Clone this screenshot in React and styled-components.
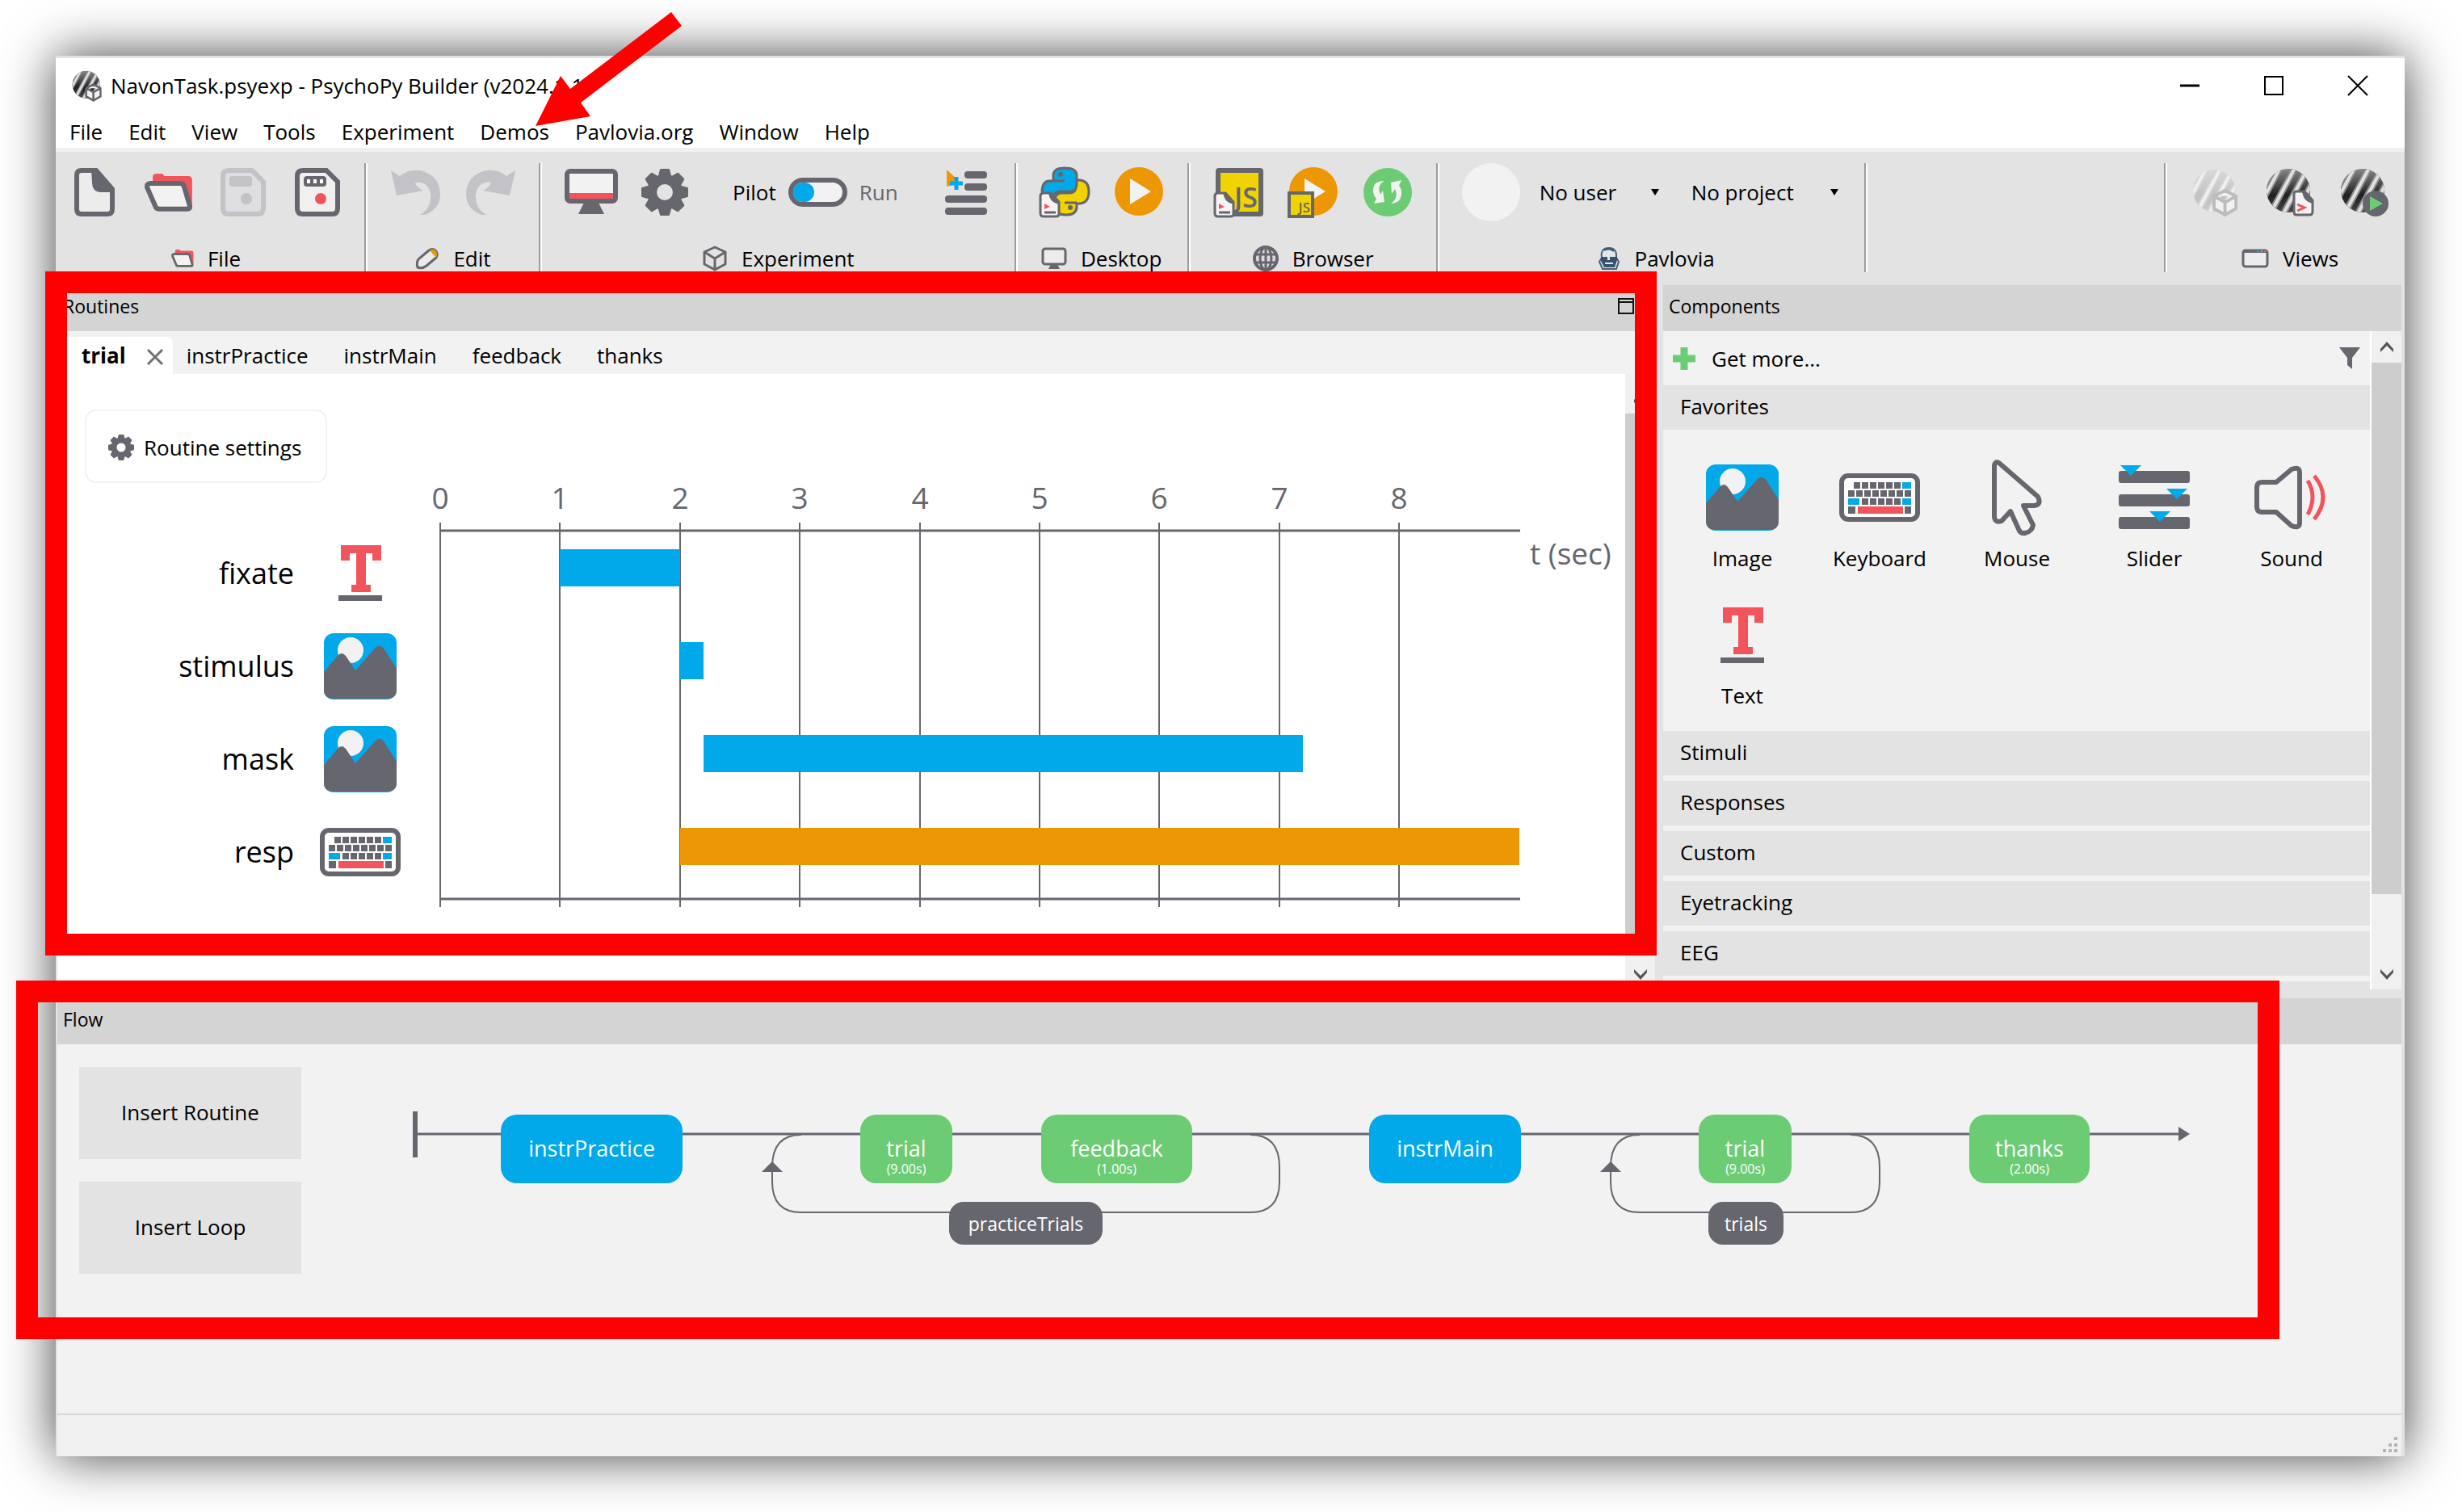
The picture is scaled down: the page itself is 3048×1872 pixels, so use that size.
import React from "react";
import styled, { createGlobalStyle } from "styled-components";

const C = {
  ink: "#66666e",
  blue: "#02a9ea",
  red: "#f2545b",
  orange: "#ec9703",
  green: "#6ccc74",
  yellow: "#f1d302",
  faded: "#c3c3c7",
  bar: "#e3e3e3",
  head: "#d4d4d4",
  panel: "#f2f2f2",
  thumb: "#cdcdcd",
  mark: "#ff0000",
};

const Global = createGlobalStyle`
  *, *::before, *::after { box-sizing: border-box; }
  body { margin: 0; background: #fff; }
  body, button, input, select { font-family: "Open Sans", "Noto Sans", sans-serif; font-size: 26px; line-height: 34px; color: #000; }
  button { border: 0; padding: 0; margin: 0; background: none; cursor: pointer; }
  svg { display: block; flex: none; overflow: visible; }
`;

const Page = styled.div`
  position: relative;
  display: flex;
  height: 100vh;
  padding: 69px 71px 69px 69px;
  overflow: hidden;
`;
const AppWindow = styled.div`
  flex: 1;
  min-width: 0;
  display: flex;
  flex-direction: column;
  background: #fff;
  box-shadow: 0 0 60px rgba(0, 0, 0, 0.75);
`;
const TitleBar = styled.header`
  display: flex;
  align-items: center;
  height: 74px;
  padding: 0 6px 4px 20px;
  border-top: 3px solid #e2e2e2;
`;
const Title = styled.h1`
  flex: 1;
  margin: 0 0 0 10px;
  font-size: 26px;
  font-weight: 400;
`;
const WindowButton = styled.button`
  display: grid;
  place-items: center;
  width: 104px;
  height: 66px;
`;
const MenuBar = styled.nav`
  display: flex;
  align-items: center;
  gap: 32px;
  height: 40px;
  padding-left: 17px;
`;
const Body = styled.div`
  flex: 1;
  min-height: 0;
  display: flex;
  flex-direction: column;
  padding: 0 4px 0 2px;
  border-top: 5px solid #f0f0f0;
  background: ${C.bar};
`;

const Toolbar = styled.div`
  display: flex;
  height: 165px;
  padding: 14px 0 16px;
`;
const Group = styled.section`
  display: flex;
  flex-direction: column;
  justify-content: space-between;
  align-items: center;
  padding: 0 ${(p) => p.$end ?? 28}px 0 ${(p) => p.$start ?? 28}px;
  ${(p) => !p.$last && "border-right: 2px solid #9c9c9c; box-shadow: 2px 0 0 #fff;"}
`;
const Spacer = styled.div`
  flex: 1;
  border-right: 2px solid #9c9c9c;
  box-shadow: 2px 0 0 #fff;
`;
const Tools = styled.div`
  display: flex;
  align-items: center;
  gap: ${(p) => p.$gap || 28}px;
  height: 72px;
`;
const Tool = styled.button`
  display: grid;
  place-items: center;
  width: 64px;
  height: 64px;
`;
const GroupLabel = styled.div`
  display: flex;
  align-items: center;
  gap: 17px;
  height: 34px;
`;
const PilotSwitch = styled.label`
  display: flex;
  align-items: center;
  gap: 15px;
  margin: 0 24px;
`;
const RunText = styled.span`
  color: ${C.ink};
`;
const Toggle = styled.input`
  appearance: none;
  width: 73px;
  height: 36px;
  margin: 0;
  border: 6px solid ${C.ink};
  border-radius: 18px;
  background: ${C.panel};
  &::before {
    content: "";
    display: block;
    width: 26px;
    height: 24px;
    border-radius: 13px;
    background: ${C.blue};
  }
`;
const Avatar = styled.div`
  width: 72px;
  height: 72px;
  border-radius: 50%;
  background: ${C.panel};
`;
const Picker = styled.label`
  display: flex;
  align-items: center;
  width: ${(p) => p.$width}px;
  margin-right: 16px;
`;
const Select = styled.select`
  flex: 1;
  min-width: 0;
  appearance: none;
  border: 0;
  padding: 0;
  background: transparent;
`;

const Workspace = styled.main`
  flex: 1;
  min-height: 0;
  display: flex;
  gap: 10px;
  padding-bottom: 11px;
`;
const Panel = styled.section`
  display: flex;
  flex-direction: column;
  min-width: 0;
  min-height: 0;
  ${(p) => (p.$width ? `width: ${p.$width}px;` : "flex: 1;")}
`;
const PanelHead = styled.h2`
  display: flex;
  align-items: center;
  justify-content: space-between;
  flex: none;
  height: 57px;
  margin: 0;
  padding: 0 26px 6px 7px;
  background: ${C.head};
  font-size: 23px;
  font-weight: 400;
`;
const Tabs = styled.div`
  display: flex;
  align-items: flex-end;
  flex: none;
  height: 53px;
  background: ${C.panel};
`;
const Tab = styled.button`
  display: flex;
  align-items: center;
  gap: 26px;
  height: 46px;
  padding: 0 ${(p) => (p.$active ? 12 : 22)}px;
  padding-left: ${(p) => (p.$active ? 30 : p.$first ? 17 : 22)}px;
  border-radius: 8px 8px 0 0;
  background: ${(p) => (p.$active ? "#fff" : "transparent")};
  font-weight: ${(p) => (p.$active ? 700 : 400)};
`;
const Split = styled.div`
  flex: 1;
  min-height: 0;
  display: flex;
  overflow: hidden;
  background: ${(p) => p.$bg || "#fff"};
`;
const RoutineView = styled.div`
  flex: 1;
  min-width: 0;
  padding: 44px 0 0 34px;
`;
const SettingsButton = styled.button`
  display: flex;
  align-items: center;
  gap: 12px;
  height: 91px;
  padding: 2px 30px 0 27px;
  border: 2px solid ${C.panel};
  border-radius: 14px;
`;
const Timeline = styled.div`
  display: flex;
`;
const Rows = styled.ul`
  width: 394px;
  margin: 0;
  padding: 54px 0 0;
  list-style: none;
`;
const Row = styled.li`
  display: flex;
  align-items: center;
  justify-content: flex-end;
  gap: 29px;
  height: 115px;
  font-size: 36px;
  line-height: 48px;
`;
const RowIcon = styled.span`
  display: grid;
  place-items: center;
  width: 106px;
`;
const ChartText = styled.text`
  fill: ${C.ink};
  font-size: 37px;
  text-anchor: ${(p) => p.$anchor || "middle"};
`;

const ScrollBar = styled.div`
  display: flex;
  flex-direction: column;
  flex: none;
  width: 39px;
  padding-top: ${(p) => p.$top || 0}px;
  border-left: 2px solid #fff;
  background: #f0f0f0;
`;
const ScrollButton = styled.button`
  display: grid;
  place-items: center;
  height: 39px;
`;
const Thumb = styled.div`
  flex: 1;
  margin-bottom: ${(p) => p.$rest}px;
  background: ${C.thumb};
`;

const Library = styled.div`
  flex: 1;
  min-width: 0;
  display: flex;
  flex-direction: column;
`;
const GetMoreRow = styled.div`
  display: flex;
  align-items: center;
  justify-content: space-between;
  flex: none;
  height: 67px;
  padding: 0 12px;
`;
const GetMore = styled.button`
  display: flex;
  align-items: center;
  gap: 20px;
`;
const Category = styled.button`
  flex: none;
  height: 55px;
  margin-bottom: ${(p) => (p.$open ? 0 : 7)}px;
  padding: 0 0 3px 21px;
  background: ${C.bar};
  text-align: left;
`;
const CategoryEdge = styled.div`
  flex: 1;
  background: ${C.bar};
`;
const Favorites = styled.div`
  display: grid;
  grid-template-columns: repeat(5, 170px);
  flex: none;
  padding: 28px 0 5px 13px;
`;
const ComponentButton = styled.button`
  display: grid;
  grid-template-rows: 112px 38px;
  place-items: center;
  align-content: start;
  height: 170px;
`;

const FlowBody = styled.div`
  display: flex;
  flex: none;
  gap: 27px;
  height: 457px;
  padding-left: 27px;
  background: ${C.panel};
`;
const FlowButtons = styled.div`
  display: flex;
  flex-direction: column;
  gap: 28px;
  width: 275px;
  padding-top: 28px;
`;
const InsertButton = styled.button`
  height: 114px;
  padding-bottom: 2px;
  background: ${C.bar};
`;
const Canvas = styled.div`
  position: relative;
  flex: 1;
`;
const Node = styled.button`
  position: absolute;
  top: 87px;
  left: ${(p) => p.$x}px;
  display: flex;
  flex-direction: column;
  align-items: center;
  width: ${(p) => p.$w}px;
  height: 85px;
  padding-top: 25px;
  border-radius: 20px;
  background: ${(p) => p.$color};
  color: #fff;
  font-size: 27px;
  line-height: 34px;
`;
const Duration = styled.span`
  font-size: 16px;
  line-height: 16px;
`;
const LoopLabel = styled.button`
  position: absolute;
  top: 195px;
  left: ${(p) => p.$x}px;
  width: ${(p) => p.$w}px;
  height: 53px;
  border-radius: 18px;
  background: ${C.ink};
  color: #fff;
  font-size: 23px;
`;
const StatusBar = styled.footer`
  display: flex;
  justify-content: flex-end;
  align-items: flex-end;
  flex: none;
  height: 53px;
  padding: 4px;
  border-top: 2px solid #d7d7d7;
  background: #f0f0f0;
`;

const Highlight = styled.div`
  position: absolute;
  top: ${(p) => p.$top}px;
  left: ${(p) => p.$left}px;
  right: ${(p) => p.$right}px;
  height: ${(p) => p.$height}px;
  border: 27px solid ${C.mark};
  pointer-events: none;
`;
const Pointer = styled.svg`
  position: absolute;
  top: 0;
  left: 0;
  pointer-events: none;
`;

const Gear = ({ size = 58 }) => (
  <svg width={size} height={size} viewBox="-29 -29 58 58">
    {[0, 45, 90, 135, 180, 225, 270, 315].map((a) => (
      <path key={a} d="M-8-17 L-5-28 H5 L8-17Z" fill={C.ink} stroke={C.ink} strokeWidth="2" strokeLinejoin="round" transform={`rotate(${a})`} />
    ))}
    <circle r="16" fill="none" stroke={C.ink} strokeWidth="12" />
  </svg>
);
const NewFile = () => (
  <svg width="50" height="60" viewBox="0 0 50 60">
    <path d="M9 3H27L47 26V51Q47 57 41 57H9Q3 57 3 51V9Q3 3 9 3Z" fill="#ececec" stroke={C.ink} strokeWidth="6" />
    <path d="M21 2H28L49 26V30H32Q22 29 22 18Z" fill={C.ink} />
  </svg>
);
const Folder = ({ width = 60 }) => (
  <svg width={width} height={width * 0.78} viewBox="0 0 60 47">
    <path d="M10 11V4Q10 0 15 0H20Q24 0 24 3H54Q59 3 59 8V42L52 18Q50 11 44 11Z" fill={C.red} />
    <path d="M8 12H44Q48 12 49 16L56 40Q57 44 53 44H18Q14 44 13 40L3 17Q2 12 8 12Z" fill={C.panel} stroke={C.ink} strokeWidth="6" />
  </svg>
);
const Disk = ({ color, slot, dots }) => (
  <svg width="56" height="60" viewBox="0 0 56 60">
    <path d="M10 3H39L53 17V50Q53 57 46 57H10Q3 57 3 50V10Q3 3 10 3Z" fill={dots ? "#f0f0f0" : "#dedee0"} stroke={color} strokeWidth="6" />
    <rect x="11" y="10" width="28" height="13" rx="4" fill={color} />
    {dots && [15, 23, 31].map((x) => <rect key={x} x={x} y="14" width="4" height="5" fill="#fff" />)}
    <circle cx="32" cy="38" r="7" fill={slot} />
  </svg>
);
const Undo = ({ flip }) => (
  <svg width="62" height="58" viewBox="0 0 62 58" transform={flip ? "scale(-1 1)" : undefined}>
    <path d="M0 2L11 9Q22 0 36 2Q61 8 61 33Q60 50 42 57H36Q51 48 49 31Q46 15 30 17Q31 22 40 27L7 33Z" fill={C.faded} />
  </svg>
);
const Monitor = () => (
  <svg width="66" height="58" viewBox="0 0 66 58">
    <rect x="3" y="3" width="60" height="37" rx="4" fill={C.panel} stroke={C.ink} strokeWidth="6" />
    <rect x="6" y="30" width="54" height="7" fill={C.red} />
    <path d="M24 42H42L49 56H17Z" fill={C.ink} />
  </svg>
);
const SmallMonitor = () => (
  <svg width="32" height="28" viewBox="0 0 32 28">
    <rect x="2" y="2" width="28" height="19" rx="3" fill="#ececec" stroke={C.ink} strokeWidth="3" />
    <path d="M12 21H20L23 27H9Z" fill={C.ink} />
  </svg>
);
const AddLines = () => (
  <svg width="52" height="56" viewBox="0 0 52 56">
    <path d="M2 0L14 11L10 19L2 21Z" fill={C.orange} />
    <path d="M14 9V25M6 17H22" stroke={C.blue} strokeWidth="5" />
    {[[24, 2], [24, 17], [0, 32], [0, 47]].map(([x, y]) => (
      <rect key={y} x={x} y={y} width={52 - x} height="9" rx="4" fill={C.ink} />
    ))}
  </svg>
);
const Script = ({ x = 0, y = 30 }) => (
  <g transform={`translate(${x} ${y})`}>
    <path d="M5 1H14L24 12V27Q24 30 20 30H5Q1 30 1 26V5Q1 1 5 1Z" fill="#f4f4f4" stroke={C.ink} strokeWidth="3" />
    <path d="M11 0H15L25 12V15Q12 13 11 0Z" fill={C.ink} />
    <path d="M6 14L13 18L6 21Z" fill={C.red} />
    <path d="M6 25H20" stroke={C.ink} strokeWidth="3" />
  </g>
);
const Python = () => (
  <svg width="62" height="62" viewBox="0 0 62 62">
    <g stroke={C.ink} strokeWidth="3" strokeLinejoin="round">
      <path d="M45 16H50Q61 17 61 30Q61 44 50 45H46V50Q45 59 33 59Q20 59 19 51V39Q20 32 28 32H38Q45 31 45 24Z" fill={C.yellow} />
      <path d="M17 16V9Q18 1 31 1Q45 1 46 9V22Q45 30 38 30H25Q19 31 16 36L11 41Q3 39 3 29Q4 17 12 17H31" fill={C.blue} />
    </g>
    <circle cx="26" cy="9" r="3" fill={C.ink} />
    <circle cx="38" cy="50" r="3" fill={C.ink} />
    <path d="M31 44H46" stroke={C.ink} strokeWidth="3" />
    <Script x={0} y={31} />
  </svg>
);
const Play = ({ js }) => (
  <svg width="62" height="64" viewBox="0 0 62 64">
    <circle cx="31" cy="31" r="30" fill={C.orange} />
    <path d="M20 15L46 31L20 47Z" fill={C.panel} />
    {js && (
      <g>
        <rect x="1" y="33" width="29" height="29" fill={C.yellow} stroke={C.ink} strokeWidth="4" />
        <text x="27" y="57" fontSize="17" fontWeight="600" textAnchor="end" fill={C.ink}>JS</text>
      </g>
    )}
  </svg>
);
const JsFile = () => (
  <svg width="62" height="62" viewBox="0 0 62 62">
    <rect x="5" y="4" width="53" height="54" rx="1" fill={C.yellow} stroke={C.ink} strokeWidth="6" />
    <text x="54" y="50" fontSize="34" fontWeight="600" textAnchor="end" fill={C.ink}>JS</text>
    <Script x={0} y={31} />
  </svg>
);
const Sync = () => (
  <svg width="62" height="62" viewBox="0 0 62 62">
    <circle cx="31" cy="31" r="30" fill={C.green} />
    <path d="M26 17Q12 17 13 31Q14 36 17 39L14 45L27 43L25 29L22 34Q17 24 26 17Z" fill={C.panel} />
    <path d="M35 45Q49 44 48 30Q48 26 45 23L48 16L35 19L36 33L40 27Q45 38 35 45Z" fill={C.panel} />
  </svg>
);
const Pencil = () => (
  <svg width="30" height="28" viewBox="0 0 30 28">
    <path d="M3 25Q1 18 5 14L17 4Q21 1 25 4Q29 8 26 13L14 23Q9 27 3 25Z" fill="#ececec" stroke={C.ink} strokeWidth="3" />
    <path d="M18 4Q23 1 26 5Q28 9 26 13Z" fill={C.orange} />
  </svg>
);
const Cube = ({ size = 32, fill = "none", stroke = C.ink }) => (
  <svg width={size} height={size} viewBox="0 0 32 32">
    <path d="M16 2L29 8V23L16 30L3 23V8ZM3 8L16 16L29 8M16 16V30" fill={fill} stroke={stroke} strokeWidth="3" strokeLinejoin="round" />
  </svg>
);
const Globe = () => (
  <svg width="32" height="32" viewBox="0 0 32 32">
    <circle cx="16" cy="16" r="14" fill="#dcdcdc" stroke={C.ink} strokeWidth="4" />
    <g fill="none" stroke={C.ink} strokeWidth="3">
      <ellipse cx="16" cy="16" rx="7" ry="14" />
      <path d="M16 2V30M3 11H29M3 21H29" />
    </g>
  </svg>
);
const Pavlov = () => (
  <svg width="28" height="30" viewBox="0 0 28 30">
    <path d="M5 14Q3 2 14 2Q24 2 23 14L26 19L23 28H6L2 19Z" fill="#dfe6ec" stroke="#46637c" strokeWidth="2" />
    <path d="M4 13H12V17H15V13H24V17L21 26H8L4 18Z" fill="#35536c" />
    <path d="M8 5Q14 1 20 6" stroke="#35536c" strokeWidth="2" fill="none" />
    <path d="M9 21H19" stroke="#dfe6ec" strokeWidth="2" />
  </svg>
);
const ViewsIcon = () => (
  <svg width="34" height="24" viewBox="0 0 34 24">
    <rect x="2" y="2" width="30" height="20" rx="3" fill="#ececec" stroke={C.ink} strokeWidth="3" />
    <path d="M2 3H32" stroke={C.ink} strokeWidth="4" />
    <path d="M19 3H22" stroke={C.blue} strokeWidth="2" />
    <path d="M24 3H26" stroke={C.green} strokeWidth="2" />
    <path d="M28 3H31" stroke={C.red} strokeWidth="2" />
  </svg>
);
const Ball = ({ id, size = 60, kind, faint }) => (
  <svg width={size} height={size} viewBox="0 0 60 60">
    <defs>
      <clipPath id={id}>
        <circle cx="28" cy="28" r="27" />
      </clipPath>
      <linearGradient id={`${id}g`} x1="0" y1="0" x2="0" y2="1">
        <stop offset="0" stopColor={faint ? "#dadada" : "#8a8a8a"} />
        <stop offset="0.600" stopColor={faint ? "#c2c2c2" : "#202020"} />
        <stop offset="1" stopColor={faint ? "#c9c9c9" : "#4a4a4a"} />
      </linearGradient>
    </defs>
    <g clipPath={`url(#${id})`}>
      <rect width="56" height="56" fill={`url(#${id}g)`} />
      <path d="M-4 40L20 -4M7 54L36 0M20 60L50 4M35 60L60 14" stroke={faint ? "#d6d6d6" : "#8c8c8c"} strokeWidth="8" />
      <path d="M-4 40L20 -4M7 54L36 0M20 60L50 4M35 60L60 14" stroke={faint ? "#efefef" : "#e0e0e0"} strokeWidth="4" />
    </g>
    {kind === "cube" && (
      <g transform="translate(26 26)">
        <path d="M16 2L30 9V25L16 33L2 25V9ZM2 9L16 17L30 9M16 17V33" fill="#f2f2f2" stroke={faint ? "#bcbcbf" : C.ink} strokeWidth="4" strokeLinejoin="round" />
      </g>
    )}
    {kind === "script" && (
      <g transform="translate(34 28)">
        <path d="M4 1H14L24 12V26Q24 30 20 30H4Q1 30 1 26V4Q1 1 4 1Z" fill="#f4f4f4" stroke={C.ink} strokeWidth="3" />
        <path d="M11 0H14L25 12V16Q12 14 11 0Z" fill={C.ink} />
        <path d="M5 17L14 21L5 25" fill="none" stroke={C.red} strokeWidth="3" />
      </g>
    )}
    {kind === "run" && (
      <g>
        <circle cx="44" cy="44" r="16" fill={C.ink} />
        <path d="M37 35L53 44L37 53Z" fill={C.green} />
      </g>
    )}
  </svg>
);
const Caret = () => (
  <svg width="10" height="8" viewBox="0 0 10 8">
    <path d="M0 0H10L5 8Z" />
  </svg>
);
const Chevron = ({ up }) => (
  <svg width="18" height="14" viewBox="0 0 18 14">
    <path d={up ? "M1 13V9L9 0L17 9V13L9 5Z" : "M1 1V5L9 14L17 5V1L9 9Z"} fill="#555" />
  </svg>
);
const TextIcon = () => (
  <svg width="54" height="69" viewBox="0 0 54 69">
    <path d="M3 0H53V19H42V10H34V49H40V58H16V49H22V10H14V19H3Z" fill={C.red} />
    <rect x="0" y="62" width="54" height="7" fill={C.ink} />
  </svg>
);
const ImageIcon = () => (
  <svg width="90" height="82" viewBox="0 0 90 82">
    <rect width="90" height="82" rx="12" fill={C.blue} />
    <circle cx="33" cy="21" r="16" fill={C.panel} />
    <path d="M0 48L17 28Q22 22 27 28L39 46L63 19Q69 12 75 20L90 44V70Q90 81 78 81H12Q0 81 0 70Z" fill={C.ink} />
  </svg>
);
const KeyboardIcon = () => (
  <svg width="100" height="60" viewBox="0 0 100 60">
    <rect x="3" y="3" width="94" height="54" rx="8" fill="#fff" stroke={C.ink} strokeWidth="6" />
    {[18, 28, 38, 48, 58, 68].map((x) => <rect key={x} x={x} y="11" width="8" height="8" fill={C.ink} />)}
    <rect x="78" y="11" width="11" height="8" fill={C.blue} />
    {[11, 21, 31, 41, 51, 61, 71, 81].map((x) => <rect key={x} x={x} y="21" width="8" height="8" fill={C.ink} />)}
    <rect x="11" y="31" width="14" height="8" fill={C.blue} />
    {[28, 38, 48, 58, 68].map((x) => <rect key={x} x={x} y="31" width="8" height="8" fill={C.ink} />)}
    <rect x="78" y="31" width="11" height="8" fill={C.blue} />
    <rect x="11" y="41" width="9" height="9" fill={C.ink} />
    <rect x="23" y="41" width="56" height="9" fill={C.red} />
    <rect x="81" y="41" width="8" height="9" fill={C.ink} />
  </svg>
);
const MouseIcon = () => (
  <svg width="62" height="94" viewBox="0 0 62 94">
    <path d="M3 7Q5 0 11 6L57 46Q62 56 52 57H39L51 81Q50 89 41 91Q35 92 33 86L23 64L12 76Q4 79 3 71Z" fill={C.panel} stroke={C.ink} strokeWidth="6" strokeLinejoin="round" />
  </svg>
);
const SliderIcon = () => (
  <svg width="88" height="80" viewBox="0 0 88 80">
    {[[7, 15], [36, 72], [64, 51]].map(([y, x]) => (
      <g key={y}>
        <rect x="0" y={y} width="88" height="15" rx="3" fill={C.ink} />
        <path d={`M${x - 13} ${y - 7}H${x + 13}L${x} ${y + 6}Z`} fill={C.blue} />
      </g>
    ))}
  </svg>
);
const SoundIcon = () => (
  <svg width="92" height="78" viewBox="0 0 92 78">
    <path d="M9 20H27L46 4Q56 0 56 8V70Q56 78 46 74L27 57H9Q3 57 3 50V27Q3 20 9 20Z" fill="none" stroke={C.ink} strokeWidth="6" strokeLinejoin="round" />
    <path d="M66 18Q78 38 66 60M74 12Q96 38 74 66" fill="none" stroke={C.red} strokeWidth="5" />
  </svg>
);

const routineRows = [
  { name: "fixate", icon: <TextIcon />, from: 1, to: 2, color: C.blue },
  { name: "stimulus", icon: <ImageIcon />, from: 2, to: 2.2, color: C.blue },
  { name: "mask", icon: <ImageIcon />, from: 2.2, to: 7.2, color: C.blue },
  { name: "resp", icon: <KeyboardIcon />, from: 2, to: 9, color: C.orange },
];
const favorites = [
  ["Image", <ImageIcon />],
  ["Keyboard", <KeyboardIcon />],
  ["Mouse", <MouseIcon />],
  ["Slider", <SliderIcon />],
  ["Sound", <SoundIcon />],
  ["Text", <TextIcon />],
];
const nodes = [
  { name: "instrPractice", x: 220, w: 225, color: C.blue },
  { name: "trial", x: 665, w: 114, color: C.green, time: "(9.00s)" },
  { name: "feedback", x: 889, w: 187, color: C.green, time: "(1.00s)" },
  { name: "instrMain", x: 1295, w: 188, color: C.blue },
  { name: "trial", x: 1703, w: 115, color: C.green, time: "(9.00s)" },
  { name: "thanks", x: 2038, w: 149, color: C.green, time: "(2.00s)" },
];
const loops = [
  { name: "practiceTrials", from: 556, to: 1184, x: 775, w: 190 },
  { name: "trials", from: 1594, to: 1927, x: 1715, w: 93 },
];

const ORIGIN = 46;
const SECOND = 148.4;
const at = (t) => Math.round(ORIGIN + t * SECOND);

const Chart = () => (
  <svg width="1500" height="532" role="img" aria-label="Routine timeline in seconds">
    <g stroke={C.ink} strokeWidth="2">
      {[0, 1, 2, 3, 4, 5, 6, 7, 8].map((t) => (
        <path key={t} d={`M${at(t)} 49V525`} />
      ))}
      <path d={`M${at(0)} 59H${at(9) + 1}M${at(0)} 515H${at(9) + 1}`} strokeWidth="3" />
    </g>
    {[0, 1, 2, 3, 4, 5, 6, 7, 8].map((t) => (
      <ChartText key={t} x={at(t)} y="32">{t}</ChartText>
    ))}
    <ChartText x="1395" y="101" $anchor="start">t (sec)</ChartText>
    {routineRows.map((r, i) => (
      <rect key={r.name} x={at(r.from)} y={82 + i * 115} width={at(r.to) - at(r.from)} height="46" fill={r.color} />
    ))}
  </svg>
);

const FlowLines = () => (
  <svg width="2320" height="270" aria-hidden="true">
    <path d="M114 83V140" stroke={C.ink} strokeWidth="6" />
    <path d="M114 111H2300" stroke={C.ink} strokeWidth="3" />
    <path d="M2297 102L2311 111L2297 120Z" fill={C.ink} />
    {loops.map((l) => (
      <g key={l.name}>
        <path d={`M${l.from + 36} 112Q${l.from} 112 ${l.from} 152V170Q${l.from} 208 ${l.from + 36} 208H${l.to - 36}Q${l.to} 208 ${l.to} 170V152Q${l.to} 112 ${l.to - 36} 112`} fill="none" stroke={C.ink} strokeWidth="2" />
        <path d={`M${l.from - 13} 158L${l.from} 145L${l.from + 13} 158Z`} fill={C.ink} />
      </g>
    ))}
  </svg>
);

export default function App() {
  return (
    <Page>
      <Global />
      <AppWindow>
        <TitleBar>
          <Ball id="logo" size={38} kind="cube" />
          <Title>NavonTask.psyexp - PsychoPy Builder (v2024.1.1)</Title>
          <WindowButton aria-label="Minimize">
            <svg width="24" height="24"><path d="M0 12H24" stroke="#000" strokeWidth="3" /></svg>
          </WindowButton>
          <WindowButton aria-label="Maximize">
            <svg width="24" height="24"><rect x="1" y="1" width="22" height="22" fill="none" stroke="#000" strokeWidth="2" /></svg>
          </WindowButton>
          <WindowButton aria-label="Close">
            <svg width="24" height="24"><path d="M0 0L24 24M24 0L0 24" stroke="#000" strokeWidth="2" /></svg>
          </WindowButton>
        </TitleBar>
        <MenuBar>
          {["File", "Edit", "View", "Tools", "Experiment", "Demos", "Pavlovia.org", "Window", "Help"].map((m) => (
            <button key={m}>{m}</button>
          ))}
        </MenuBar>
        <Body>
          <Toolbar>
            <Group $start={14} $end={26}>
              <Tools>
                <Tool aria-label="New"><NewFile /></Tool>
                <Tool aria-label="Open"><Folder /></Tool>
                <Tool aria-label="Save"><Disk color={C.faded} slot={C.faded} /></Tool>
                <Tool aria-label="Save as"><Disk color={C.ink} slot={C.red} dots /></Tool>
              </Tools>
              <GroupLabel><Folder width={28} />File</GroupLabel>
            </Group>
            <Group $start={30}>
              <Tools>
                <Tool aria-label="Undo"><Undo /></Tool>
                <Tool aria-label="Redo"><Undo flip /></Tool>
              </Tools>
              <GroupLabel><Pencil />Edit</GroupLabel>
            </Group>
            <Group $start={30}>
              <Tools>
                <Tool aria-label="Monitor center"><Monitor /></Tool>
                <Tool aria-label="Experiment settings"><Gear /></Tool>
                <PilotSwitch>
                  Pilot
                  <Toggle type="checkbox" />
                  <RunText>Run</RunText>
                </PilotSwitch>
                <Tool aria-label="Add to runner"><AddLines /></Tool>
              </Tools>
              <GroupLabel><Cube />Experiment</GroupLabel>
            </Group>
            <Group>
              <Tools>
                <Tool aria-label="Write Python"><Python /></Tool>
                <Tool aria-label="Run Python"><Play /></Tool>
              </Tools>
              <GroupLabel><SmallMonitor />Desktop</GroupLabel>
            </Group>
            <Group $start={30}>
              <Tools>
                <Tool aria-label="Write JS"><JsFile /></Tool>
                <Tool aria-label="Run JS"><Play js /></Tool>
                <Tool aria-label="Sync"><Sync /></Tool>
              </Tools>
              <GroupLabel><Globe />Browser</GroupLabel>
            </Group>
            <Group $start={30} $end={16}>
              <Tools $gap={24}>
                <Avatar />
                <Picker $width={148}>
                  <Select aria-label="User"><option>No user</option></Select>
                  <Caret />
                </Picker>
                <Picker $width={182}>
                  <Select aria-label="Project"><option>No project</option></Select>
                  <Caret />
                </Picker>
              </Tools>
              <GroupLabel><Pavlov />Pavlovia</GroupLabel>
            </Group>
            <Spacer />
            <Group $start={30} $end={14} $last>
              <Tools>
                <Tool aria-label="Builder"><Ball id="builder" size={58} kind="cube" faint /></Tool>
                <Tool aria-label="Coder"><Ball id="coder" kind="script" /></Tool>
                <Tool aria-label="Runner"><Ball id="runner" kind="run" /></Tool>
              </Tools>
              <GroupLabel><ViewsIcon />Views</GroupLabel>
            </Group>
          </Toolbar>

          <Workspace>
            <Panel>
              <PanelHead>
                Routines
                <svg width="20" height="20"><path d="M1 1H19V19H1ZM1 5H19" fill="none" stroke="#111" strokeWidth="2" /></svg>
              </PanelHead>
              <Tabs>
                <Tab $active>
                  trial
                  <svg width="20" height="20"><path d="M1 3L19 21M19 3L1 21" stroke="#707070" strokeWidth="3" /></svg>
                </Tab>
                <Tab $first>instrPractice</Tab>
                <Tab>instrMain</Tab>
                <Tab>feedback</Tab>
                <Tab>thanks</Tab>
              </Tabs>
              <Split>
                <RoutineView>
                  <SettingsButton><Gear size={32} />Routine settings</SettingsButton>
                  <Timeline>
                    <Rows>
                      {routineRows.map((r) => (
                        <Row key={r.name}>
                          {r.name}
                          <RowIcon>{r.icon}</RowIcon>
                        </Row>
                      ))}
                    </Rows>
                    <Chart />
                  </Timeline>
                </RoutineView>
                <ScrollBar $top={10}>
                  <ScrollButton aria-label="Scroll up"><Chevron up /></ScrollButton>
                  <Thumb $rest={18} />
                  <ScrollButton aria-label="Scroll down"><Chevron /></ScrollButton>
                </ScrollBar>
              </Split>
            </Panel>

            <Panel $width={914}>
              <PanelHead>Components</PanelHead>
              <Split $bg={C.panel}>
                <Library>
                  <GetMoreRow>
                    <GetMore>
                      <svg width="28" height="28"><path d="M14 0V28M0 14H28" stroke={C.green} strokeWidth="9" /></svg>
                      Get more...
                    </GetMore>
                    <button aria-label="Filter">
                      <svg width="26" height="28"><path d="M0 0H26L16 13V27L10 22V13Z" fill={C.ink} /></svg>
                    </button>
                  </GetMoreRow>
                  <Category $open>Favorites</Category>
                  <Favorites>
                    {favorites.map(([name, icon]) => (
                      <ComponentButton key={name}>
                        {icon}
                        {name}
                      </ComponentButton>
                    ))}
                  </Favorites>
                  {["Stimuli", "Responses", "Custom", "Eyetracking", "EEG"].map((c) => (
                    <Category key={c}>{c}</Category>
                  ))}
                  <CategoryEdge />
                </Library>
                <ScrollBar>
                  <ScrollButton aria-label="Scroll up"><Chevron up /></ScrollButton>
                  <Thumb $rest={79} />
                  <ScrollButton aria-label="Scroll down"><Chevron /></ScrollButton>
                </ScrollBar>
              </Split>
            </Panel>
          </Workspace>

          <PanelHead>Flow</PanelHead>
          <FlowBody>
            <FlowButtons>
              <InsertButton>Insert Routine</InsertButton>
              <InsertButton>Insert Loop</InsertButton>
            </FlowButtons>
            <Canvas>
              <FlowLines />
              {nodes.map((n) => (
                <Node key={n.x} $x={n.x} $w={n.w} $color={n.color}>
                  {n.name}
                  {n.time && <Duration>{n.time}</Duration>}
                </Node>
              ))}
              {loops.map((l) => (
                <LoopLabel key={l.name} $x={l.x} $w={l.w}>{l.name}</LoopLabel>
              ))}
            </Canvas>
          </FlowBody>
          <StatusBar>
            <svg width="20" height="20" aria-hidden="true">
              {[[15, 0], [8, 8], [15, 8], [1, 15], [8, 15], [15, 15]].map(([x, y]) => (
                <rect key={`${x}-${y}`} x={x} y={y} width="4" height="4" fill="#b4b4b4" />
              ))}
            </svg>
          </StatusBar>
        </Body>
      </AppWindow>
      <Highlight $top={336} $left={56} $right={997} $height={847} />
      <Highlight $top={1214} $left={20} $right={226} $height={444} />
      <Pointer width="860" height="170" aria-hidden="true">
        <path d="M663 156L731 144L719 127L844 32L831 15L706 110L694 94Z" fill={C.mark} />
      </Pointer>
    </Page>
  );
}
